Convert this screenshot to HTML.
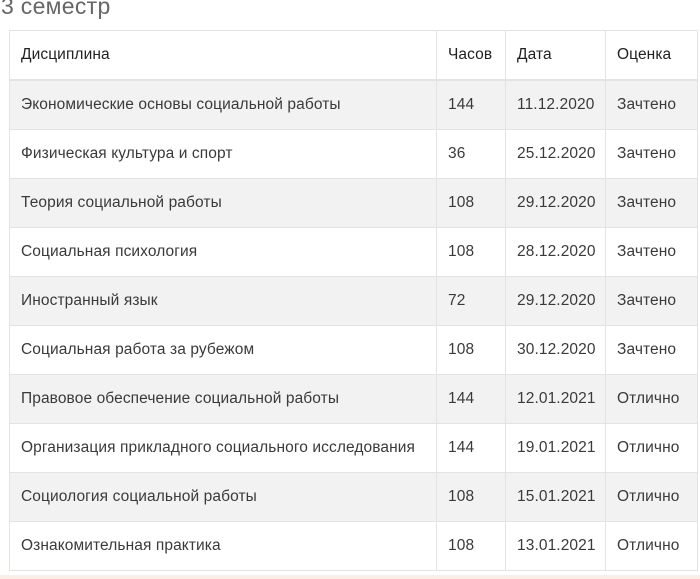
<!DOCTYPE html>
<html><head><meta charset="utf-8"><style>
body{margin:0;width:700px;height:579px;overflow:hidden;background:#fff;font-family:"Liberation Sans",sans-serif;color:#3a3a3a;position:relative}
h1{position:absolute;left:1px;top:-7px;margin:0;font-weight:normal;font-size:23px;color:#666;letter-spacing:0.3px}
table{position:absolute;left:9px;top:30px;width:688px;border-collapse:collapse;font-size:15.5px;table-layout:fixed}
td,th{border:1px solid #e3e3e3;height:48px;padding:0 0 0 11px;text-align:left;font-weight:normal;white-space:nowrap;letter-spacing:0.1px}
th{border-bottom:2px solid #e3e3e3;color:#222}
tr:nth-child(even) td{background:#f2f2f2}
.bot{position:absolute;left:0;top:575px;width:700px;height:4px;background:#fbeee6}
</style></head><body>
<h1>3 семестр</h1>
<table>
<colgroup><col style="width:427px"><col style="width:69px"><col style="width:100px"><col style="width:92px"></colgroup>
<tr><th>Дисциплина</th><th>Часов</th><th>Дата</th><th>Оценка</th></tr>
<tr><td>Экономические основы социальной работы</td><td>144</td><td>11.12.2020</td><td>Зачтено</td></tr>
<tr><td>Физическая культура и спорт</td><td>36</td><td>25.12.2020</td><td>Зачтено</td></tr>
<tr><td>Теория социальной работы</td><td>108</td><td>29.12.2020</td><td>Зачтено</td></tr>
<tr><td>Социальная психология</td><td>108</td><td>28.12.2020</td><td>Зачтено</td></tr>
<tr><td>Иностранный язык</td><td>72</td><td>29.12.2020</td><td>Зачтено</td></tr>
<tr><td>Социальная работа за рубежом</td><td>108</td><td>30.12.2020</td><td>Зачтено</td></tr>
<tr><td>Правовое обеспечение социальной работы</td><td>144</td><td>12.01.2021</td><td>Отлично</td></tr>
<tr><td>Организация прикладного социального исследования</td><td>144</td><td>19.01.2021</td><td>Отлично</td></tr>
<tr><td>Социология социальной работы</td><td>108</td><td>15.01.2021</td><td>Отлично</td></tr>
<tr><td>Ознакомительная практика</td><td>108</td><td>13.01.2021</td><td>Отлично</td></tr>
</table>
<div class="bot"></div>
</body></html>
